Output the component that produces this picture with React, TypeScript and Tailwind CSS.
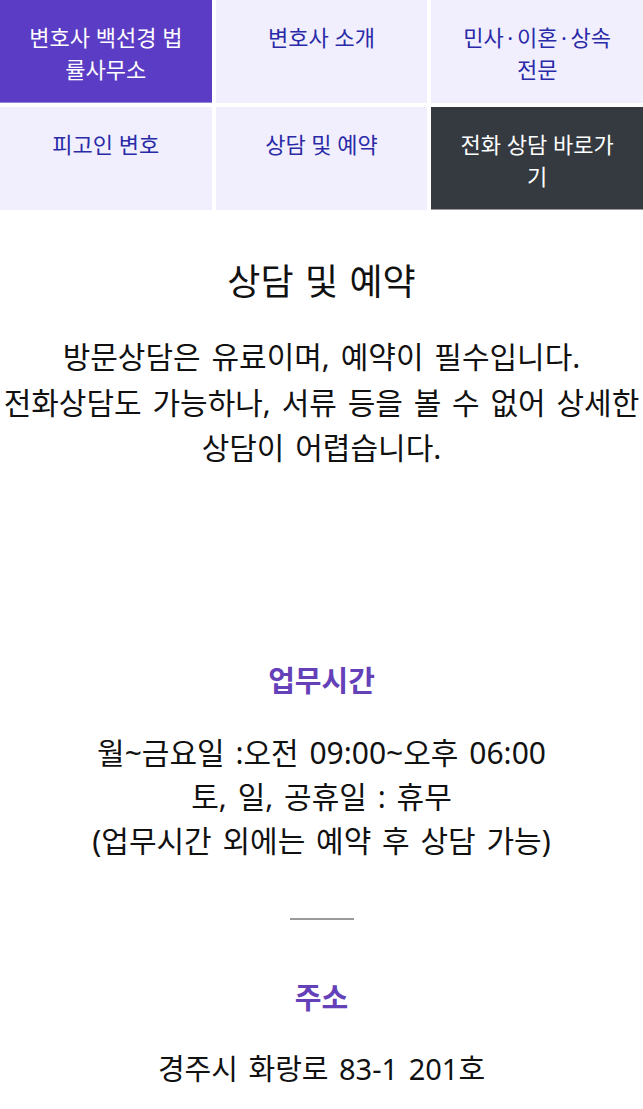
import React from "react";

const font = { fontFamily: '"Noto Sans", "Noto Sans CJK KR", sans-serif' };

type Tone = "active" | "light" | "dark";

const navItems: { label: string; tone: Tone }[] = [
  { label: "변호사 백선경 법률사무소", tone: "active" },
  { label: "변호사 소개", tone: "light" },
  { label: "민사\u202F·\u202F이혼\u202F·\u202F상속 전문", tone: "light" },
  { label: "피고인 변호", tone: "light" },
  { label: "상담 및 예약", tone: "light" },
  { label: "전화 상담 바로가기", tone: "dark" },
];

function NavCell({ label, tone }: { label: string; tone: Tone }) {
  const cls =
    tone === "active"
      ? "bg-[#5b3cc4] text-white border-b border-[#8f84d8]"
      : tone === "dark"
      ? "bg-[#343a40] text-white border-b border-[#9a9a9a]"
      : "bg-[#f1effd] text-[#2a2aa8]";
  return (
    <div className={`h-[103px] px-5 pt-[21px] text-center text-[22px] leading-[32px] ${cls}`}>
      {label}
    </div>
  );
}

export default function App() {
  return (
    <div className="w-[643px] bg-white text-[#111]" style={font}>
      <nav className="grid grid-cols-3 gap-1">
        {navItems.map((n) => (
          <NavCell key={n.label} label={n.label} tone={n.tone} />
        ))}
      </nav>

      <section className="text-center pt-[48px]">
        <h1 className="text-[36px] leading-[48px] font-normal [word-spacing:2px]">상담 및 예약</h1>
        <p className="mt-[28px] text-[30px] leading-[45.5px] [word-spacing:3px]">
          방문상담은 유료이며, 예약이 필수입니다.
          <br />
          전화상담도 가능하나, 서류 등을 볼 수 없어 상세한 상담이 어렵습니다.
        </p>
      </section>

      <section className="text-center pt-[190px]">
        <h2 className="text-[29px] leading-[40px] font-bold text-[#6441b8]">업무시간</h2>
        <p className="mt-[30px] text-[30px] leading-[44px] [word-spacing:3px]">
          월~금요일 :오전 09:00~오후 06:00
          <br />
          토, 일, 공휴일 : 휴무
          <br />
          (업무시간 외에는 예약 후 상담 가능)
        </p>
        <div className="mx-auto mt-[55px] h-[2px] w-[64px] bg-[#9a9a9a]" />
      </section>

      <section className="text-center pt-[58px] pb-6">
        <h2 className="text-[29px] leading-[40px] font-bold text-[#6441b8]">주소</h2>
        <p className="mt-[29px] text-[29px] leading-[44px] [word-spacing:3px]">경주시 화랑로 83-1 201호</p>
      </section>
    </div>
  );
}
